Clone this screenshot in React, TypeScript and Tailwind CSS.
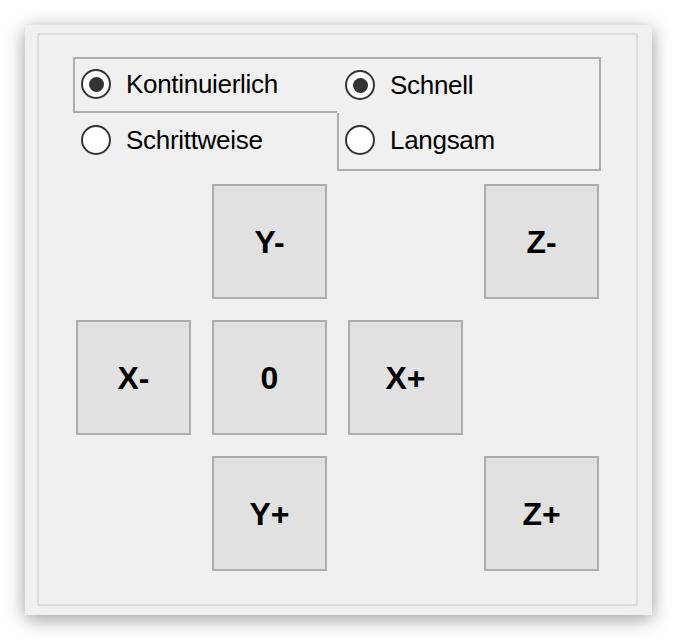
function Radio({ label, checked }: { label: string; checked?: boolean }) {
  return (
    <div className="flex items-center">
      <div className="w-[30px] h-[30px] rounded-full border-[2.5px] border-[#333333] bg-white flex items-center justify-center">
        {checked && <div className="w-[15px] h-[15px] rounded-full bg-[#333333]" />}
      </div>
      <span className="ml-[15px] text-[26px] leading-none tracking-[-0.3px] text-black">{label}</span>
    </div>
  );
}

function JogButton({ label }: { label: string }) {
  return (
    <button className="w-[115px] h-[115px] bg-[#e1e1e1] border-2 border-[#adadad] flex items-center justify-center text-[32px] font-bold text-black leading-none">
      {label}
    </button>
  );
}

export default function App() {
  return (
    <div
      className="w-[676px] h-[640px] bg-white pt-[25px] pl-[25px]"
      style={{ fontFamily: '"Liberation Sans", Arial, sans-serif' }}
    >
      <div className="w-[627px] h-[590px] bg-[#f0f0f0] pt-[8px] pl-[12px] shadow-[0_4px_18px_rgba(0,0,0,0.4)]">
        <div className="w-[601px] h-[573px] border-2 border-[#dcdcdc]">
          {/* mode / speed selection */}
          <div className="ml-[34px] mt-[22px] grid grid-cols-[264px_264px] grid-rows-[56px_58px]">
            <div className="border-t-2 border-l-2 border-b-2 border-[#adadad] flex items-center pl-[6px] pb-[2px]">
              <Radio label="Kontinuierlich" checked />
            </div>
            <div className="border-t-2 border-r-2 border-[#adadad] flex items-center pl-[8px] pb-[2px]">
              <Radio label="Schnell" checked />
            </div>
            <div className="flex items-center pl-[8px] pb-[4px]">
              <Radio label="Schrittweise" />
            </div>
            <div className="border-l-2 border-b-2 border-r-2 border-[#adadad] flex items-center pl-[6px] pb-[2px]">
              <Radio label="Langsam" />
            </div>
          </div>

          {/* jog buttons */}
          <div className="ml-[37px] mt-[13px] grid grid-cols-[115px_115px_115px_115px] gap-x-[21px] gap-y-[21px]">
            <div />
            <JogButton label="Y-" />
            <div />
            <JogButton label="Z-" />
            <JogButton label="X-" />
            <JogButton label="0" />
            <JogButton label="X+" />
            <div />
            <div />
            <JogButton label="Y+" />
            <div />
            <JogButton label="Z+" />
          </div>
        </div>
      </div>
    </div>
  );
}
